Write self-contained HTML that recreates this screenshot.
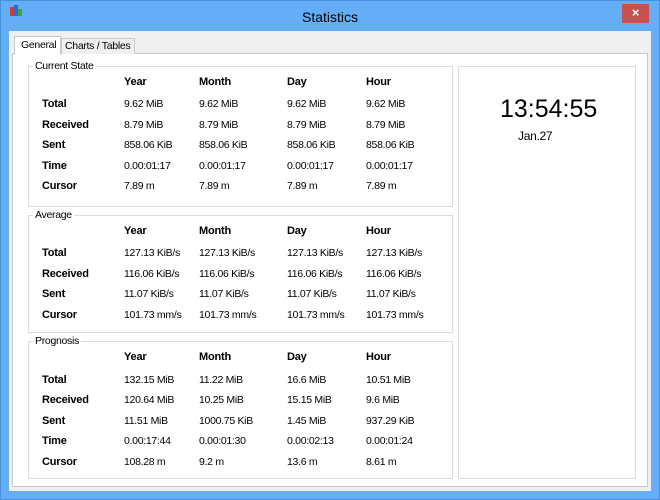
<!DOCTYPE html>
<html><head><meta charset="utf-8"><style>
*{margin:0;padding:0;box-sizing:border-box}
body{width:660px;height:500px;background:#fff;font-family:"Liberation Sans",Arial,sans-serif;font-size:10.5px;letter-spacing:-0.3px;color:#000;position:relative;overflow:hidden}
.a{position:absolute;white-space:nowrap;line-height:14px}
.b{font-weight:bold;font-size:11px;letter-spacing:-0.2px}
.box{position:absolute;border:1px solid #dcdcdc;background:#fff}
.lg{position:absolute;background:#fff;padding:0 2px;line-height:13px;color:#000}
</style></head><body>
<div style="position:absolute;left:0;top:0;width:660px;height:500px;background:#63aef7;border:1px solid #4a90d9"></div>
<div style="position:absolute;left:10px;top:7px;width:4px;height:9px;background:#d33"></div>
<div style="position:absolute;left:14px;top:5px;width:4px;height:11px;background:#36c"></div>
<div style="position:absolute;left:18px;top:9px;width:4px;height:7px;background:#3a3"></div>
<div class="a" style="left:0;width:660px;top:9px;text-align:center;font-size:14px;letter-spacing:0;line-height:16px;color:#000">Statistics</div>
<div style="position:absolute;left:622px;top:4px;width:27px;height:19px;background:#c75050;color:#fff;text-align:center;font-size:13px;line-height:18px;font-weight:bold">×</div>
<div style="position:absolute;left:9px;top:31px;width:642px;height:460px;background:#f0f0f0"></div>
<div style="position:absolute;left:12px;top:53px;width:636px;height:434px;background:#fff;border:1px solid #c8c8c8"></div>
<div style="position:absolute;left:61px;top:38px;width:74px;height:16px;background:#f0f0f0;border:1px solid #c8c8c8;border-bottom:none"></div>
<div class="a" style="left:65px;top:39px">Charts / Tables</div>
<div style="position:absolute;left:14px;top:36px;width:47px;height:19px;background:#fff;border:1px solid #c8c8c8;border-bottom:none"></div>
<div class="a" style="left:21px;top:38px">General</div>

<div class="box" style="left:28px;top:66px;width:425px;height:141px"></div>
<div class="lg" style="left:33px;top:60px">Current State</div>
<div class="box" style="left:28px;top:215px;width:425px;height:118px"></div>
<div class="lg" style="left:33px;top:209px">Average</div>
<div class="box" style="left:28px;top:341px;width:425px;height:138px"></div>
<div class="lg" style="left:33px;top:335px">Prognosis</div>
<div class="box" style="left:458px;top:66px;width:178px;height:413px"></div>
<div class="a" style="left:500px;top:94px;font-size:25px;letter-spacing:0;line-height:30px">13:54:55</div>
<div class="a" style="left:518px;top:129px;font-size:12px;letter-spacing:-0.3px">Jan.27</div>

<!-- Current -->
<div class="a b" style="left:124px;top:75px">Year</div><div class="a b" style="left:199px;top:75px">Month</div><div class="a b" style="left:287px;top:75px">Day</div><div class="a b" style="left:366px;top:75px">Hour</div>
<div class="a b" style="left:42px;top:97px">Total</div><div class="a" style="left:124px;top:97px">9.62 MiB</div><div class="a" style="left:199px;top:97px">9.62 MiB</div><div class="a" style="left:287px;top:97px">9.62 MiB</div><div class="a" style="left:366px;top:97px">9.62 MiB</div>
<div class="a b" style="left:42px;top:118px">Received</div><div class="a" style="left:124px;top:118px">8.79 MiB</div><div class="a" style="left:199px;top:118px">8.79 MiB</div><div class="a" style="left:287px;top:118px">8.79 MiB</div><div class="a" style="left:366px;top:118px">8.79 MiB</div>
<div class="a b" style="left:42px;top:138px">Sent</div><div class="a" style="left:124px;top:138px">858.06 KiB</div><div class="a" style="left:199px;top:138px">858.06 KiB</div><div class="a" style="left:287px;top:138px">858.06 KiB</div><div class="a" style="left:366px;top:138px">858.06 KiB</div>
<div class="a b" style="left:42px;top:159px">Time</div><div class="a" style="left:124px;top:159px">0.00:01:17</div><div class="a" style="left:199px;top:159px">0.00:01:17</div><div class="a" style="left:287px;top:159px">0.00:01:17</div><div class="a" style="left:366px;top:159px">0.00:01:17</div>
<div class="a b" style="left:42px;top:179px">Cursor</div><div class="a" style="left:124px;top:179px">7.89 m</div><div class="a" style="left:199px;top:179px">7.89 m</div><div class="a" style="left:287px;top:179px">7.89 m</div><div class="a" style="left:366px;top:179px">7.89 m</div>

<!-- Average -->
<div class="a b" style="left:124px;top:224px">Year</div><div class="a b" style="left:199px;top:224px">Month</div><div class="a b" style="left:287px;top:224px">Day</div><div class="a b" style="left:366px;top:224px">Hour</div>
<div class="a b" style="left:42px;top:246px">Total</div><div class="a" style="left:124px;top:246px">127.13 KiB/s</div><div class="a" style="left:199px;top:246px">127.13 KiB/s</div><div class="a" style="left:287px;top:246px">127.13 KiB/s</div><div class="a" style="left:366px;top:246px">127.13 KiB/s</div>
<div class="a b" style="left:42px;top:267px">Received</div><div class="a" style="left:124px;top:267px">116.06 KiB/s</div><div class="a" style="left:199px;top:267px">116.06 KiB/s</div><div class="a" style="left:287px;top:267px">116.06 KiB/s</div><div class="a" style="left:366px;top:267px">116.06 KiB/s</div>
<div class="a b" style="left:42px;top:287px">Sent</div><div class="a" style="left:124px;top:287px">11.07 KiB/s</div><div class="a" style="left:199px;top:287px">11.07 KiB/s</div><div class="a" style="left:287px;top:287px">11.07 KiB/s</div><div class="a" style="left:366px;top:287px">11.07 KiB/s</div>
<div class="a b" style="left:42px;top:308px">Cursor</div><div class="a" style="left:124px;top:308px">101.73 mm/s</div><div class="a" style="left:199px;top:308px">101.73 mm/s</div><div class="a" style="left:287px;top:308px">101.73 mm/s</div><div class="a" style="left:366px;top:308px">101.73 mm/s</div>

<!-- Prognosis -->
<div class="a b" style="left:124px;top:350px">Year</div><div class="a b" style="left:199px;top:350px">Month</div><div class="a b" style="left:287px;top:350px">Day</div><div class="a b" style="left:366px;top:350px">Hour</div>
<div class="a b" style="left:42px;top:373px">Total</div><div class="a" style="left:124px;top:373px">132.15 MiB</div><div class="a" style="left:199px;top:373px">11.22 MiB</div><div class="a" style="left:287px;top:373px">16.6 MiB</div><div class="a" style="left:366px;top:373px">10.51 MiB</div>
<div class="a b" style="left:42px;top:393px">Received</div><div class="a" style="left:124px;top:393px">120.64 MiB</div><div class="a" style="left:199px;top:393px">10.25 MiB</div><div class="a" style="left:287px;top:393px">15.15 MiB</div><div class="a" style="left:366px;top:393px">9.6 MiB</div>
<div class="a b" style="left:42px;top:414px">Sent</div><div class="a" style="left:124px;top:414px">11.51 MiB</div><div class="a" style="left:199px;top:414px">1000.75 KiB</div><div class="a" style="left:287px;top:414px">1.45 MiB</div><div class="a" style="left:366px;top:414px">937.29 KiB</div>
<div class="a b" style="left:42px;top:434px">Time</div><div class="a" style="left:124px;top:434px">0.00:17:44</div><div class="a" style="left:199px;top:434px">0.00:01:30</div><div class="a" style="left:287px;top:434px">0.00:02:13</div><div class="a" style="left:366px;top:434px">0.00:01:24</div>
<div class="a b" style="left:42px;top:455px">Cursor</div><div class="a" style="left:124px;top:455px">108.28 m</div><div class="a" style="left:199px;top:455px">9.2 m</div><div class="a" style="left:287px;top:455px">13.6 m</div><div class="a" style="left:366px;top:455px">8.61 m</div>
</body></html>
